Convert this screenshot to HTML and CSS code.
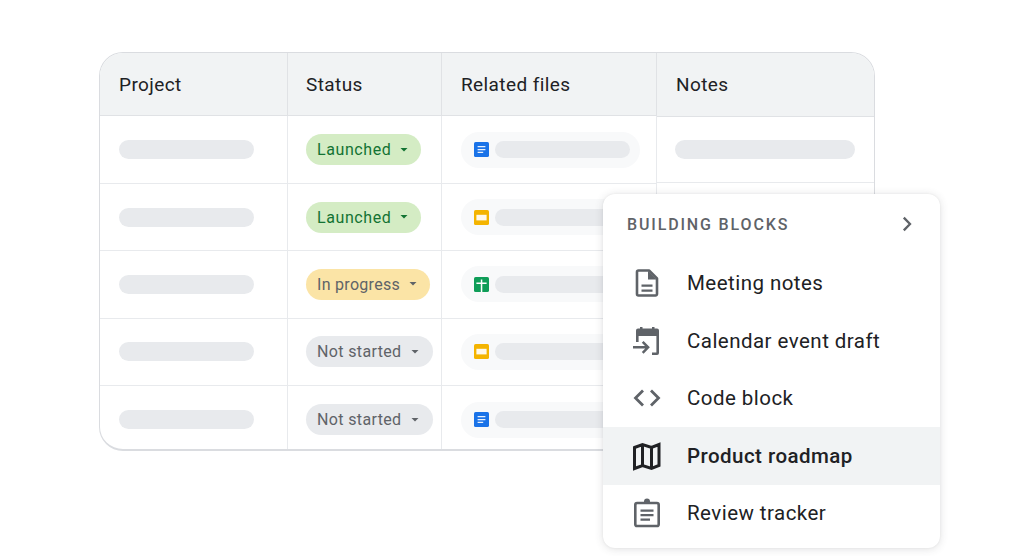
FILE: index.html
```html
<!DOCTYPE html>
<html lang="en">
<head>
<meta charset="utf-8">
<title>Building blocks</title>
<link rel="stylesheet" href="styles.css">
</head>
<body>
<svg class="defs" width="0" height="0" aria-hidden="true">
  <symbol id="doc" viewBox="0 0 15 15"><rect width="15" height="15" rx="1.6" fill="#1a73e8"/><path d="M3.600 4h7.800v1.300H3.600zM3.600 6.900h7.800v1.300H3.600zM3.600 9.800h5.600v1.300H3.600z" fill="#fff" opacity=".9"/></symbol>
  <symbol id="slides" viewBox="0 0 15 15"><rect width="15" height="15" rx="1.6" fill="#f4b400"/><rect x="2.400" y="4.800" width="10.200" height="5.600" fill="#fff" opacity=".92"/></symbol>
  <symbol id="sheet" viewBox="0 0 15 15"><rect width="15" height="15" rx="1.6" fill="#0f9d58"/><path d="M2.400 5.400h10.200v1.500H8.300V15H6.800V6.900H2.400zM6.800 2.600h1.500v3H6.800z" fill="#fff"/></symbol>
  <symbol id="caret" viewBox="0 0 8 4"><path d="M0.500 0h7L4 3.600z" fill="currentColor"/></symbol>
</svg>

<main class="stage">
  <section class="table">
    <div class="row head">
      <div class="cell">Project</div>
      <div class="cell">Status</div>
      <div class="cell">Related files</div>
      <div class="cell">Notes</div>
    </div>
    <div class="row first">
      <div class="cell"><span class="bar bar-project"></span></div>
      <div class="cell"><span class="pill green">Launched<svg class="caret"><use href="#caret"/></svg></span></div>
      <div class="cell"><span class="chip"><svg class="file"><use href="#doc"/></svg><span class="bar bar-file"></span></span></div>
      <div class="cell"><span class="bar bar-notes"></span></div>
    </div>
    <div class="row">
      <div class="cell"><span class="bar bar-project"></span></div>
      <div class="cell"><span class="pill green">Launched<svg class="caret"><use href="#caret"/></svg></span></div>
      <div class="cell"><span class="chip"><svg class="file"><use href="#slides"/></svg><span class="bar bar-file"></span></span></div>
      <div class="cell"></div>
    </div>
    <div class="row">
      <div class="cell"><span class="bar bar-project"></span></div>
      <div class="cell"><span class="pill amber">In progress<svg class="caret"><use href="#caret"/></svg></span></div>
      <div class="cell"><span class="chip"><svg class="file"><use href="#sheet"/></svg><span class="bar bar-file"></span></span></div>
      <div class="cell"></div>
    </div>
    <div class="row">
      <div class="cell"><span class="bar bar-project"></span></div>
      <div class="cell"><span class="pill grey">Not started<svg class="caret"><use href="#caret"/></svg></span></div>
      <div class="cell"><span class="chip"><svg class="file"><use href="#slides"/></svg><span class="bar bar-file"></span></span></div>
      <div class="cell"></div>
    </div>
    <div class="row">
      <div class="cell"><span class="bar bar-project"></span></div>
      <div class="cell"><span class="pill grey">Not started<svg class="caret"><use href="#caret"/></svg></span></div>
      <div class="cell"><span class="chip"><svg class="file"><use href="#doc"/></svg><span class="bar bar-file"></span></span></div>
      <div class="cell"></div>
    </div>
  </section>

  <aside class="menu">
    <div class="menu-head">
      <span class="menu-title">BUILDING BLOCKS</span>
      <svg class="chev" viewBox="0 0 10 16"><path d="M1.800 1.600 8 8l-6.200 6.400" fill="none" stroke="#5f6368" stroke-width="2.300"/></svg>
    </div>
    <div class="item">
      <svg class="icon" viewBox="0 0 30 30"><path d="M6.500 2.500a1.500 1.500 0 0 0-1.500 1.500v22a1.500 1.500 0 0 0 1.500 1.500h17a1.500 1.500 0 0 0 1.500-1.500V10.500L17 2.500z" fill="none" stroke="#5f6368" stroke-width="2.600" stroke-linejoin="round"/><path d="M16 3v8.500h8.500z" fill="#5f6368"/><path d="M9.500 16.500h11v2.300h-11zM9.500 21.500h11v2.300h-11z" fill="#5f6368"/></svg>
      <span>Meeting notes</span>
    </div>
    <div class="item">
      <svg class="icon" viewBox="0 0 30 30"><path d="M8 1h2.500v3H8zM20 1h2.500v3H20zM4 4.500a2 2 0 0 1 2-2h19a2 2 0 0 1 2 2V10H4z" fill="#5f6368"/><path d="M4 9v7h2.600V9zM24.400 9v17.400H20V29h5a2 2 0 0 0 2-2V9z" fill="#5f6368"/><path d="M1 21.300h14.500M10.700 15.800l5.400 5.500-5.400 5.500" fill="none" stroke="#5f6368" stroke-width="2.500"/></svg>
      <span>Calendar event draft</span>
    </div>
    <div class="item">
      <svg class="icon" viewBox="0 0 30 30"><path d="M11 7.500 3.500 15l7.500 7.500M19 7.500l7.500 7.500-7.500 7.500" fill="none" stroke="#5f6368" stroke-width="2.800"/></svg>
      <span>Code block</span>
    </div>
    <div class="item active">
      <svg class="icon" viewBox="0 0 30 30"><path d="M2.500 6.500 10.500 3.500l9 3 7.500-3v21l-7.500 3-9-3-8 3zM10.500 3.500v21M19.500 6.500v21" fill="none" stroke="#202124" stroke-width="3"/></svg>
      <span>Product roadmap</span>
    </div>
    <div class="item">
      <svg class="icon" viewBox="0 0 30 30"><rect x="3.300" y="5" width="23.400" height="23" rx="1.800" fill="none" stroke="#5f6368" stroke-width="2.600"/><path d="M12 3.500a3 3 0 0 1 6 0V6h-6zM8.500 11.500h13v2.300h-13zM8.500 16h13v2.300h-13zM8.500 20.500h9.500v2.300H8.500z" fill="#5f6368"/></svg>
      <span>Review tracker</span>
    </div>
  </aside>
</main>
</body>
</html>
```

FILE: styles.css
```css
* { box-sizing: border-box; }
html, body { margin: 0; height: 100%; background: #fff; overflow: hidden; }
body { font-family: Roboto, "Liberation Sans", sans-serif; color: #202124; }
.defs { position: absolute; }

.stage { position: relative; width: 1024px; height: 556px; padding: 52px 0 0 99px; }

.table {
  width: 776px;
  height: 399px;
  border: 1px solid #dadce0;
  border-bottom-width: 2px;
  border-radius: 24px;
  overflow: hidden;
}
.row {
  display: grid;
  grid-template-columns: 188px 154px 215px 1fr;
  height: 67.3px;
}
.row.first { height: 68px; }
.row.head {
  height: 63px;
  background: #f1f3f4;
  font-size: 19px;
  letter-spacing: .4px;
}
.cell {
  display: flex;
  align-items: center;
  padding-left: 18px;
  border-right: 1px solid #e8eaed;
  border-bottom: 1px solid #e8eaed;
}
.cell:first-child, .cell:nth-child(3) { padding-left: 19px; }
.row:last-child .cell { border-bottom: 0; }
.cell:last-child { border-right: 0; }
.head .cell { border-color: #e0e2e5; }
.head .cell:last-child { margin-bottom: -1px; padding-left: 19px; }
.first .cell:last-child { height: 67px; }

.bar { display: block; height: 19px; border-radius: 10px; background: #e8eaed; }
.bar-project { width: 135px; }
.bar-notes { width: 180px; }
.bar-file { width: 135px; height: 17px; border-radius: 9px; }

.pill {
  display: inline-flex;
  align-items: center;
  height: 31px;
  padding: 0 13px 0 11px;
  border-radius: 16px;
  font-size: 16px;
  letter-spacing: .5px;
  white-space: nowrap;
}
.caret { width: 8px; height: 4px; margin-left: 9px; }
.green { background: #d4ecc4; color: #137333; letter-spacing: .58px; }
.amber { background: #fbe4a6; color: #5f6368; letter-spacing: .3px; }
.grey { background: #e8eaed; color: #5f6368; letter-spacing: .36px; padding-right: 14px; }
.grey .caret { margin-left: 10px; }

.chip {
  display: flex;
  align-items: center;
  gap: 6px;
  width: 179px;
  height: 36px;
  padding-left: 13px;
  border-radius: 18px;
  background: #f8f9fa;
}
.file { width: 15px; height: 15px; flex: none; }

.menu {
  position: absolute;
  left: 603px;
  top: 194px;
  width: 337px;
  height: 354px;
  border-radius: 12px;
  background: #fff;
  box-shadow: 0 1px 8px rgba(60, 64, 67, .16), 0 0 2px rgba(60, 64, 67, .08);
  overflow: hidden;
}
.menu-head {
  display: flex;
  align-items: center;
  justify-content: space-between;
  height: 60.5px;
  padding: 0 28px 0 24px;
}
.menu-title { font-size: 16px; font-weight: 500; letter-spacing: 1.85px; color: #5f6368; }
.chev { width: 10px; height: 16px; }
.item {
  display: flex;
  align-items: center;
  gap: 25.5px;
  height: 57.5px;
  padding-left: 28.5px;
  font-size: 20.5px;
  letter-spacing: .46px;
  color: #202124;
}
.item.active { background: #f1f3f4; font-weight: 500; }
.icon { width: 30px; height: 30px; flex: none; }
```
